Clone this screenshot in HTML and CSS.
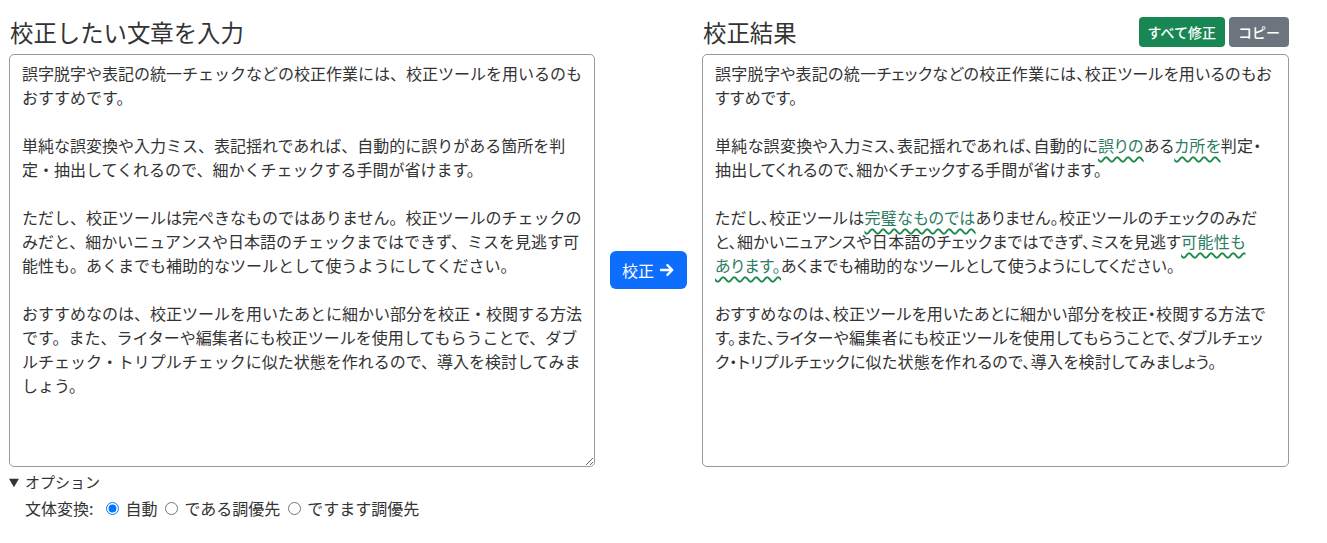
FILE: index.html
```html
<!DOCTYPE html>
<html lang="ja">
<head>
<meta charset="utf-8">
<title>校正ツール</title>
<link rel="stylesheet" href="styles.css">
</head>
<body>
<main class="app">
  <section class="col">
    <div class="col-head">
      <h4 class="title">校正したい文章を入力</h4>
    </div>
    <textarea class="editor">誤字脱字や表記の統一チェックなどの校正作業には、校正ツールを用いるのもおすすめです。

単純な誤変換や入力ミス、表記揺れであれば、自動的に誤りがある箇所を判定・抽出してくれるので、細かくチェックする手間が省けます。

ただし、校正ツールは完ぺきなものではありません。校正ツールのチェックのみだと、細かいニュアンスや日本語のチェックまではできず、ミスを見逃す可能性も。あくまでも補助的なツールとして使うようにしてください。

おすすめなのは、校正ツールを用いたあとに細かい部分を校正・校閲する方法です。また、ライターや編集者にも校正ツールを使用してもらうことで、ダブルチェック・トリプルチェックに似た状態を作れるので、導入を検討してみましょう。</textarea>
    <details class="options" open>
      <summary class="options-sum">オプション</summary>
      <div class="opt-row">
        <span class="opt-label">文体変換:</span>
        <label class="radio"><input type="radio" name="style" checked>自動</label>
        <label class="radio"><input type="radio" name="style">である調優先</label>
        <label class="radio"><input type="radio" name="style">ですます調優先</label>
      </div>
    </details>
  </section>

  <div class="mid">
    <button class="btn btn-run" type="button"><span>校正</span><svg class="arrow" viewBox="0 0 16 16" width="16" height="16" aria-hidden="true"><path d="M2 8h11.2M8.4 3.1L13.3 8l-4.9 4.9" fill="none" stroke="#fff" stroke-width="2.3" stroke-linecap="round" stroke-linejoin="round"/></svg></button>
  </div>

  <section class="col">
    <div class="col-head">
      <h4 class="title">校正結果</h4>
      <div class="actions">
        <button class="btn btn-sm btn-green" type="button">すべて修正</button>
        <button class="btn btn-sm btn-gray" type="button">コピー</button>
      </div>
    </div>
    <div class="result">誤字脱字や表記の統一チェックなどの校正作業には、校正ツールを用いるのもお<br>すすめです。<br><br>単純な誤変換や入力ミス、表記揺れであれば、自動的に<span class="fix">誤りの</span>ある<span class="fix">カ所を</span>判定・<br>抽出してくれるので、細かくチェックする手間が省けます。<br><br>ただし、校正ツールは<span class="fix">完璧なものでは</span>ありません。校正ツールのチェックのみだ<br>と、細かいニュアンスや日本語のチェックまではできず、ミスを見逃す<span class="fix">可能性も<br>あります。</span>あくまでも補助的なツールとして使うようにしてください。<br><br>おすすめなのは、校正ツールを用いたあとに細かい部分を校正・校閲する方法で<br>す。また、ライターや編集者にも校正ツールを使用してもらうことで、ダブルチェッ<br>ク・トリプルチェックに似た状態を作れるので、導入を検討してみましょう。</div>
  </section>
</main>
</body>
</html>
```

FILE: styles.css
```css
* { box-sizing: border-box; }

body {
  margin: 0;
  font-family: "Noto Sans CJK JP", "Liberation Sans", sans-serif;
  color: #212529;
  background: #fff;
}

.app {
  display: grid;
  grid-template-columns: 586px 77px 587px;
  column-gap: 15px;
  align-items: start;
  padding: 17px 9px 0;
}

.col-head {
  display: flex;
  align-items: center;
  justify-content: space-between;
  height: 30px;
  margin-bottom: 7px;
}

.title {
  margin: 0;
  font-size: 23.4px;
  font-weight: 400;
  line-height: 30px;
  color: #333;
  padding-left: 1px;
}

.editor,
.result {
  display: block;
  width: 100%;
  height: 413px;
  margin: 0;
  padding: 6px 12px;
  border: 1px solid #999;
  border-radius: 5px;
  font-family: "Noto Sans CJK JP", sans-serif;
  font-size: 16px;
  line-height: 24px;
  color: #333;
  background: #fff;
}

.editor {
  resize: vertical;
  outline: none;
}

.result {
  white-space: nowrap;
  font-feature-settings: "palt";
  letter-spacing: 0.3px;
  overflow: hidden;
}

.fix {
  color: #2e7d62;
  text-decoration: underline wavy #1f8a4c;
  text-decoration-thickness: 1.5px;
  text-underline-offset: 4px;
}

.mid {
  align-self: center;
  display: flex;
  justify-content: center;
  margin-top: 2px;
}

.btn {
  border: none;
  font-family: "Noto Sans CJK JP", sans-serif;
  color: #fff;
  cursor: pointer;
  white-space: nowrap;
}

.btn-run {
  display: flex;
  align-items: center;
  justify-content: center;
  gap: 5px;
  width: 77px;
  height: 38px;
  padding: 0;
  font-size: 16px;
  background: #0d6efd;
  border-radius: 6px;
}

.arrow { display: block; flex: none; }

.actions {
  display: flex;
  gap: 4px;
}

.btn-sm {
  height: 30px;
  padding: 0 9px;
  font-size: 14px;
  font-weight: 500;
  border-radius: 4px;
}

.btn-green { background: #198754; }
.btn-gray { background: #6c757d; }

.options {
  margin-top: 3px;
  font-size: 15px;
  line-height: 24px;
  color: #333;
}

.options-sum {
  cursor: pointer;
}

.opt-row {
  display: flex;
  align-items: center;
  padding-left: 16px;
  margin-top: 2px;
  font-size: 16px;
}

.opt-label {
  margin-right: 13px;
}

.radio {
  display: flex;
  align-items: center;
  margin-right: 8px;
}

.radio input {
  margin: 0 6px 0 0;
  width: 13px;
  height: 13px;
}
```
